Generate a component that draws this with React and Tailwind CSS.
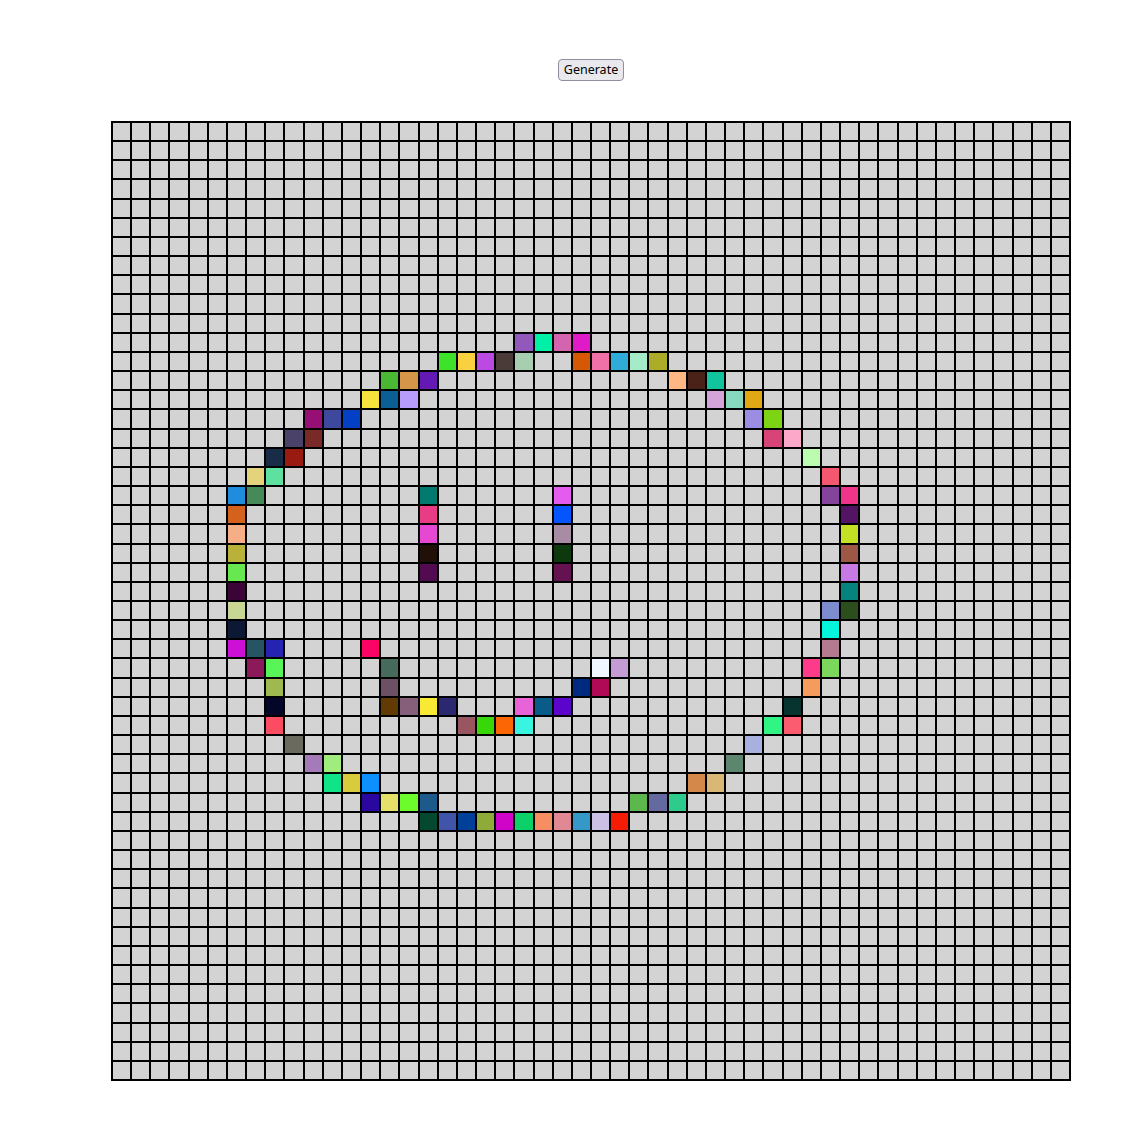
import React from "react";

const SIZE = 50;

// [row, startCol, colors...] — runs of painted cells
const RUNS = [
  [11, 21, "#9258bc", "#00f0a8", "#d464b0", "#e01ac8"],
  [12, 17, "#3ee22a", "#f8d040", "#bc4ae2", "#4a3a38", "#a8ceb0"],
  [12, 24, "#d65804", "#f070a8", "#30acd8", "#a4ecc8", "#acac28"],
  [13, 14, "#4ab832", "#d4974a", "#6418b4"],
  [13, 29, "#ffb884", "#4a2218", "#12c49e"],
  [14, 13, "#f6e23e", "#0a5f94", "#b89cfc"],
  [14, 31, "#d4a4d8", "#88d8c0", "#e0a814"],
  [15, 10, "#960f74", "#3e489c", "#0440c4"],
  [15, 33, "#9c8ce4", "#7cd414"],
  [16, 9, "#4a4268", "#7a2a26"],
  [16, 34, "#d84478", "#fca8c8"],
  [17, 8, "#182c48", "#981a10"],
  [17, 36, "#bcfcb0"],
  [18, 7, "#e4d27c", "#5ee0a0"],
  [18, 37, "#f45870"],
  [19, 6, "#208cdc", "#468a5a"],
  [19, 16, "#047a6e"],
  [19, 23, "#e45ced"],
  [19, 37, "#84449c", "#f0348a"],
  [20, 6, "#d4621c"],
  [20, 16, "#e83c84"],
  [20, 23, "#0456fc"],
  [20, 38, "#541464"],
  [21, 6, "#f6ae86"],
  [21, 16, "#e648d2"],
  [21, 23, "#a88ca4"],
  [21, 38, "#c4e024"],
  [22, 6, "#b8b23a"],
  [22, 16, "#201008"],
  [22, 23, "#0c3a0e"],
  [22, 38, "#9c5844"],
  [23, 6, "#68e850"],
  [23, 16, "#520a50"],
  [23, 23, "#641250"],
  [23, 38, "#c87ae4"],
  [24, 6, "#3a0436"],
  [24, 38, "#04847c"],
  [25, 6, "#c8d894"],
  [25, 37, "#7c8ccc", "#2c4e1c"],
  [26, 6, "#0c1834"],
  [26, 37, "#04f4dc"],
  [27, 6, "#cc10d8", "#265462", "#2424b0"],
  [27, 13, "#fc0464"],
  [27, 37, "#b47a90"],
  [28, 7, "#8a1a5a", "#58f458"],
  [28, 14, "#466a5c"],
  [28, 25, "#f0f6ff", "#c49cd4"],
  [28, 36, "#fc3c88", "#7cd85c"],
  [29, 8, "#a0b850"],
  [29, 14, "#6c5064"],
  [29, 24, "#002a80", "#b00a56"],
  [29, 36, "#f49c5c"],
  [30, 8, "#040628"],
  [30, 14, "#623a04", "#86607a", "#f8ea34", "#2c2870"],
  [30, 21, "#e862d8", "#0a5c88", "#5a04cc"],
  [30, 35, "#083430"],
  [31, 8, "#fc4c62"],
  [31, 18, "#9a5660", "#38d808", "#fc6604", "#38f4e0"],
  [31, 34, "#30f484", "#fc5c70"],
  [32, 9, "#6a6a5e"],
  [32, 33, "#a8b0e0"],
  [33, 10, "#a47ab8", "#a0ec7c"],
  [33, 32, "#5c8670"],
  [34, 11, "#10e488", "#d8cc3c", "#0c90fc"],
  [34, 30, "#d4884a", "#d8b874"],
  [35, 13, "#2a08a0", "#e4e068", "#6cfc2c", "#1c5a8c"],
  [35, 27, "#5cb84c", "#646aa0", "#2ecc8c"],
  [36, 16, "#044830", "#4054aa", "#004098", "#8eaa38", "#d004c8", "#0cd068", "#f68e64", "#e08894", "#3498c8", "#ccc0e4", "#f41c04"],
];

const painted = {};
RUNS.forEach(([row, col, ...colors]) => {
  colors.forEach((color, i) => {
    painted[`${row},${col + i}`] = color;
  });
});

export default function App() {
  const cells = [];
  for (let r = 0; r < SIZE; r++) {
    for (let c = 0; c < SIZE; c++) {
      const color = painted[`${r},${c}`];
      cells.push(
        <div
          key={`${r}-${c}`}
          className="border border-black bg-[#d3d3d3]"
          style={color ? { backgroundColor: color } : undefined}
        />
      );
    }
  }

  return (
    <div className="min-h-screen bg-white pt-[59px] font-['Noto_Sans',sans-serif]">
      <div className="ml-[111px] flex w-[960px] flex-col items-center">
        {/* Controls */}
        <button className="h-[22px] rounded-[4px] border border-[#8f8f9d] bg-[#e9e9ed] px-[5px] text-[12.5px] leading-none text-black">
          Generate
        </button>

        {/* Grid */}
        <div className="mt-[40px] grid h-[960px] w-[960px] grid-cols-[repeat(50,minmax(0,1fr))] grid-rows-[repeat(50,minmax(0,1fr))] border border-black">
          {cells}
        </div>
      </div>
    </div>
  );
}
